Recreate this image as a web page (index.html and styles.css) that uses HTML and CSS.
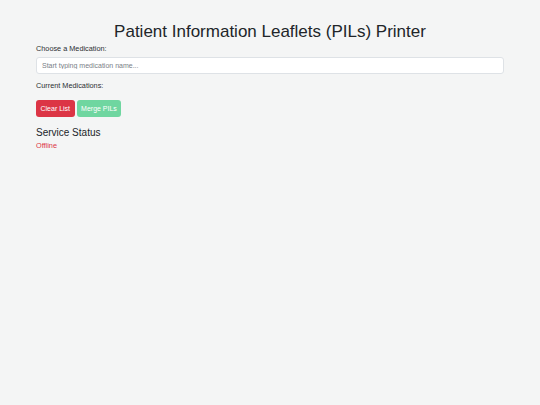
FILE: index.html
```html
<!DOCTYPE html>
<html>
<head>
<meta charset="utf-8">
<link rel="stylesheet" href="styles.css">
</head>
<body>
<div class="container">
  <h1 class="title">Patient Information Leaflets (PILs) Printer</h1>
  <div class="field">
    <label class="label">Choose a Medication:</label>
    <input class="input" type="text" placeholder="Start typing medication name...">
  </div>
  <div class="label current">Current Medications:</div>
  <div class="buttons">
    <button class="btn btn-red">Clear List</button>
    <button class="btn btn-green">Merge PILs</button>
  </div>
  <h2 class="status-title">Service Status</h2>
  <div class="status">Offline</div>
</div>
</body>
</html>
```
FILE: styles.css
```css
html, body {
  margin: 0;
  padding: 0;
  background: #f4f5f5;
  font-family: "Liberation Sans", Arial, sans-serif;
  color: #212529;
}
.container {
  width: 468px;
  margin: 0 auto;
}
.title {
  margin: 0;
  padding-top: 20px;
  font-size: 17px;
  font-weight: 400;
  text-align: center;
  line-height: 23px;
}
.field {
  display: flex;
  flex-direction: column;
  margin-top: 1px;
}
.label {
  font-size: 7.3px;
  line-height: 9px;
  color: #2b2f33;
}
.input {
  margin-top: 4px;
  height: 17px;
  box-sizing: border-box;
  border: 1px solid #dee2e6;
  border-radius: 3px;
  background: #fff;
  padding: 0 5px;
  font-family: inherit;
  font-size: 7px;
  outline: none;
}
.input::placeholder { color: #7a8087; }
.current {
  margin-top: 7px;
}
.buttons {
  display: flex;
  gap: 2px;
  margin-top: 10px;
}
.btn {
  height: 17px;
  padding: 0 4.5px;
  border: none;
  border-radius: 3px;
  font-family: inherit;
  font-size: 7px;
  color: #fff;
}
.btn-red { background: #dc3545; }
.btn-green { background: #6fd6a0; }
.status-title {
  margin: 10px 0 0;
  font-size: 10px;
  font-weight: 400;
  line-height: 12px;
}
.status {
  margin-top: 2px;
  font-size: 7.3px;
  color: #dc3545;
}
```
